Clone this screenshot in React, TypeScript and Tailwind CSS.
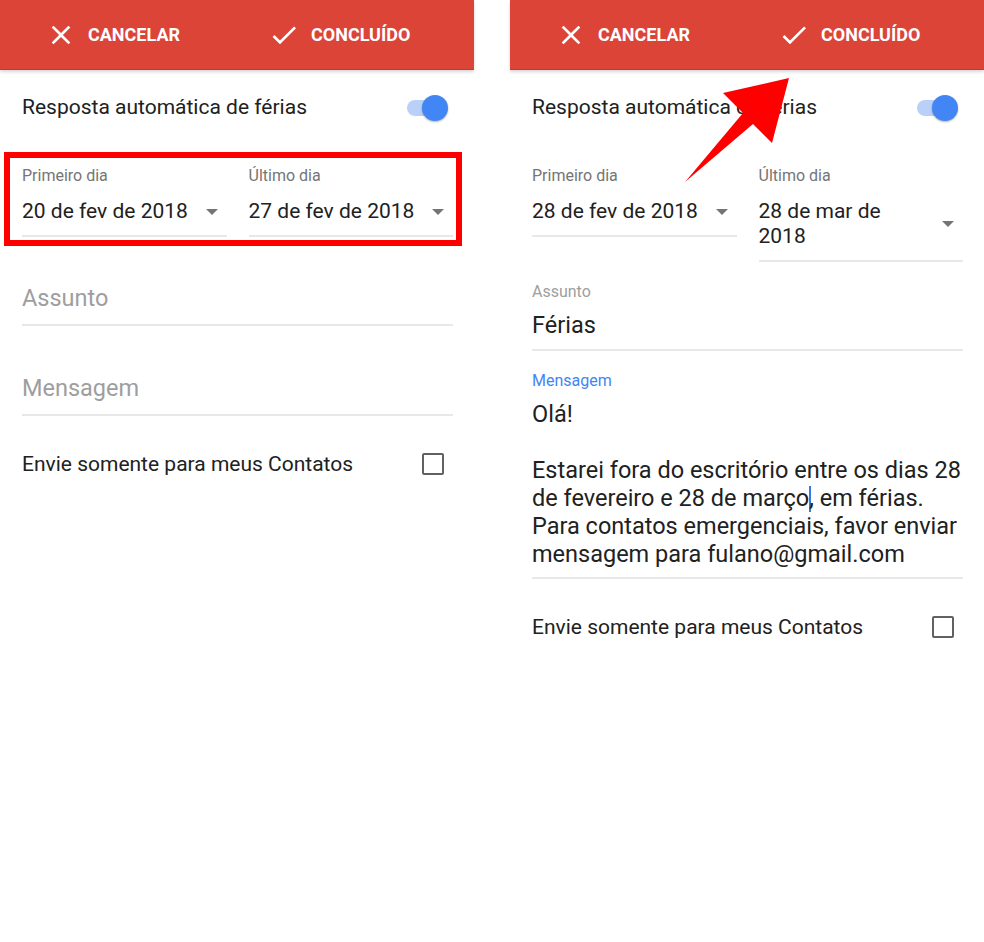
import React from 'react';

type DateField = { label: string; lines: string[] };

type PanelProps = {
  first: DateField;
  last: DateField;
  subject?: string;
  message?: string[];
  highlightDates?: boolean;
};

const CloseIcon = () => (
  <svg width="32" height="32" viewBox="0 0 24 24" fill="#fff">
    <path d="M19 6.41L17.59 5 12 10.59 6.41 5 5 6.41 10.59 12 5 17.59 6.41 19 12 13.41 17.59 19 19 17.59 13.41 12z" />
  </svg>
);

const CheckIcon = () => (
  <svg width="32" height="32" viewBox="0 0 24 24" fill="#fff">
    <path d="M9 16.17L4.83 12l-1.42 1.41L9 19 21 7l-1.41-1.41z" />
  </svg>
);

const DropArrow = () => (
  <svg width="12" height="6" viewBox="0 0 12 6" className="mr-[9px] shrink-0">
    <polygon points="0,0 12,0 6,6" fill="#757575" />
  </svg>
);

const Header = () => (
  <div className="relative z-10 h-[70px] bg-[#db4437] border-b border-[#c9382c] shadow-[0_2px_3px_rgba(0,0,0,0.16)] flex items-center pl-[45px] text-white">
    <button className="flex items-center w-[223px] h-full">
      <CloseIcon />
      <span className="ml-[11px] text-[18px] font-bold">CANCELAR</span>
    </button>
    <button className="flex items-center h-full">
      <CheckIcon />
      <span className="ml-[11px] text-[18px] font-bold">CONCLUÍDO</span>
    </button>
  </div>
);

const Toggle = () => (
  <div className="relative w-[41px] h-[26px]">
    <div className="absolute left-0 top-[5px] w-[33px] h-[16px] rounded-full bg-[#b9d0f8]" />
    <div className="absolute right-0 top-0 w-[26px] h-[26px] rounded-full bg-[#4285f4] shadow-[0_1px_2px_rgba(0,0,0,0.3)]" />
  </div>
);

const DateFieldView = ({ field }: { field: DateField }) => (
  <div>
    <div className="text-[16px] leading-[20px] text-[#757575]">{field.label}</div>
    <div className="mt-[13px] flex items-center border-b-2 border-[#e8e8e8] pb-[11px]">
      <div className="flex-1 text-[21px] leading-[25px] text-[#212121]">
        {field.lines.map((l) => (
          <div key={l} className="whitespace-nowrap">{l}</div>
        ))}
      </div>
      <DropArrow />
    </div>
  </div>
);

const Panel = ({ first, last, subject, message, highlightDates }: PanelProps) => (
  <div className="w-[474px] shrink-0 flex flex-col">
    <Header />

    <div className="h-[76px] flex items-center justify-between pl-[22px] pr-[26px]">
      <span className="text-[21px] text-[#212121]">Resposta automática de férias</span>
      <Toggle />
    </div>

    {/* datas */}
    <div className="relative">
      <div className="grid grid-cols-2 gap-x-[22px] items-start pl-[22px] pr-[21px] pt-[20px]">
        <DateFieldView field={first} />
        <DateFieldView field={last} />
      </div>
      {highlightDates && (
        <div className="absolute left-[4px] top-[6px] w-[458px] h-[94px] border-[6px] border-[#ff0000] pointer-events-none" />
      )}
    </div>

    {/* assunto e mensagem */}
    <div className="pl-[22px] pr-[21px]">
      {subject ? (
        <div className="pt-[20px] pb-[10px] border-b-2 border-[#e8e8e8]">
          <div className="text-[16px] leading-[20px] text-[#9e9e9e]">Assunto</div>
          <div className="mt-[9px] text-[23.5px] leading-[28px] text-[#212121]">{subject}</div>
        </div>
      ) : (
        <div className="pt-[47px] pb-[12px] border-b-2 border-[#e8e8e8] text-[23.5px] leading-[28px] text-[#9e9e9e]">
          Assunto
        </div>
      )}

      {message ? (
        <div className="pt-[20px] pb-[9px] border-b-2 border-[#e8e8e8]">
          <div className="text-[16px] leading-[20px] text-[#4285f4]">Mensagem</div>
          <div className="mt-[9px] text-[23.5px] leading-[28px] text-[#212121]">
            {message.map((l, i) => (
              <div key={i} className="whitespace-nowrap h-[28px]">
                {l.includes('|') ? (
                  <>
                    {l.split('|')[0]}
                    <span className="inline-block w-[2px] h-[26px] -mr-[2px] align-[-6px] bg-[#3b78e7]" />
                    {l.split('|')[1]}
                  </>
                ) : (
                  l
                )}
              </div>
            ))}
          </div>
        </div>
      ) : (
        <div className="pt-[48px] pb-[12px] border-b-2 border-[#e8e8e8] text-[23.5px] leading-[28px] text-[#9e9e9e]">
          Mensagem
        </div>
      )}
    </div>

    <div className="pt-[36px] flex items-center justify-between pl-[22px] pr-[30px]">
      <span className="text-[21px] leading-[24px] text-[#212121]">Envie somente para meus Contatos</span>
      <div className="w-[22px] h-[22px] border-2 border-[#616161] rounded-[2px]" />
    </div>
  </div>
);

export default function App() {
  return (
    <div className="relative w-[984px] h-[942px] bg-white overflow-hidden flex gap-[36px] font-['Roboto','Liberation_Sans',sans-serif]">
      <Panel
        first={{ label: 'Primeiro dia', lines: ['20 de fev de 2018'] }}
        last={{ label: 'Último dia', lines: ['27 de fev de 2018'] }}
        highlightDates
      />
      <Panel
        first={{ label: 'Primeiro dia', lines: ['28 de fev de 2018'] }}
        last={{ label: 'Último dia', lines: ['28 de mar de', '2018'] }}
        subject="Férias"
        message={[
          'Olá!',
          '',
          'Estarei fora do escritório entre os dias 28',
          'de fevereiro e 28 de março|, em férias.',
          'Para contatos emergenciais, favor enviar',
          'mensagem para fulano@gmail.com',
        ]}
      />

      {/* seta vermelha */}
      <svg
        className="absolute left-[680px] top-[70px] z-20 pointer-events-none"
        width="115"
        height="120"
        viewBox="680 70 115 120"
      >
        <polygon
          points="685,182 743,113 723,93 789,78 772,143 753,124"
          fill="#ff0000"
        />
      </svg>
    </div>
  );
}
